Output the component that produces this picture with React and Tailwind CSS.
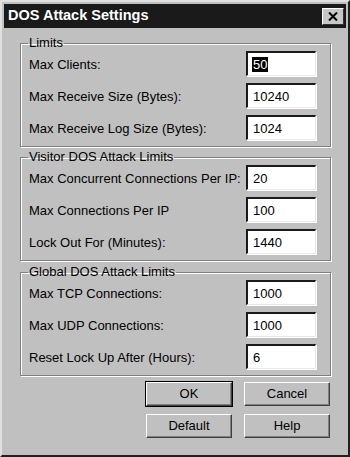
import React from "react";

const font = { fontFamily: '"Liberation Sans", Arial, sans-serif' };

const Field = ({ label, value, selected }) => (
  <div className="flex items-center justify-between h-[25px]">
    <span className="text-[13px] text-black pt-[3px]">{label}</span>
    <div className="w-[70px] h-[25px] bg-white border-t-2 border-l-2 border-b border-r border-t-[#1a1a1a] border-l-[#1a1a1a] border-b-[#e8e8e8] border-r-[#e8e8e8] shadow-[1px_1px_0_#fff] flex items-center pl-[4px]">
      {selected ? (
        <span className="bg-black text-white text-[13px] leading-[15px] px-[1px]">{value}</span>
      ) : (
        <span className="text-[13px] text-black leading-[15px] px-[1px]">{value}</span>
      )}
    </div>
  </div>
);

const Group = ({ title, children, className = "" }) => (
  <fieldset
    className={
      "border border-[#7f7f7f] shadow-[1px_1px_0_#fff,inset_1px_1px_0_#fff] pl-[8px] pr-[14px] pb-[6px] pt-0 " +
      className
    }
  >
    <legend className="text-[13px] leading-[16px] text-black px-[1px] ml-[-1px]">{title}</legend>
    <div className="flex flex-col gap-[7px]">{children}</div>
  </fieldset>
);

const Btn = ({ children, isDefault }) => (
  <div className={isDefault ? "border border-black" : "border border-transparent"}>
    <button className="w-[86px] h-[24px] bg-[#c0c0c0] text-[13px] text-black border border-t-white border-l-white border-b-[#404040] border-r-[#404040] shadow-[inset_-1px_-1px_0_#808080] flex items-center justify-center">
      {children}
    </button>
  </div>
);

export default function App() {
  return (
    <div style={font} className="w-[350px] h-[457px] bg-[#c0c0c0] border-2 border-t-[#e0e0e0] border-l-[#e0e0e0] border-b-[#202020] border-r-[#202020] p-[2px] flex flex-col">
      <div className="h-[24px] bg-[#1a1a1a] flex items-center justify-between pl-[4px] pr-[2px]">
        <span className="text-white font-bold text-[14.5px]">DOS Attack Settings</span>
        <button className="w-[22px] h-[17px] bg-[#c8c8c8] border border-t-white border-l-white border-b-[#303030] border-r-[#303030] flex items-center justify-center">
          <svg width="10" height="9" viewBox="0 0 10 9">
            <path d="M1 0.5 L9 8.5 M9 0.5 L1 8.5" stroke="#000" strokeWidth="2" />
          </svg>
        </button>
      </div>
      <div className="pl-[16px] pr-[15px] pt-[7px] flex flex-col">
        <Group title="Limits">
          <Field label="Max Clients:" value="50" selected />
          <Field label="Max Receive Size (Bytes):" value="10240" />
          <Field label="Max Receive Log Size (Bytes):" value="1024" />
        </Group>
        <Group title="Visitor DOS Attack Limits" className="mt-[2px]">
          <Field label="Max Concurrent Connections Per IP:" value="20" />
          <Field label="Max Connections Per IP" value="100" />
          <Field label="Lock Out For (Minutes):" value="1440" />
        </Group>
        <Group title="Global DOS Attack Limits" className="mt-[3px]">
          <Field label="Max TCP Connections:" value="1000" />
          <Field label="Max UDP Connections:" value="1000" />
          <Field label="Reset Lock Up After (Hours):" value="6" />
        </Group>
        <div className="mt-[5px] flex flex-col items-end gap-[6px]">
          <div className="flex gap-[10px]">
            <Btn isDefault>OK</Btn>
            <Btn>Cancel</Btn>
          </div>
          <div className="flex gap-[10px]">
            <Btn>Default</Btn>
            <Btn>Help</Btn>
          </div>
        </div>
      </div>
    </div>
  );
}
